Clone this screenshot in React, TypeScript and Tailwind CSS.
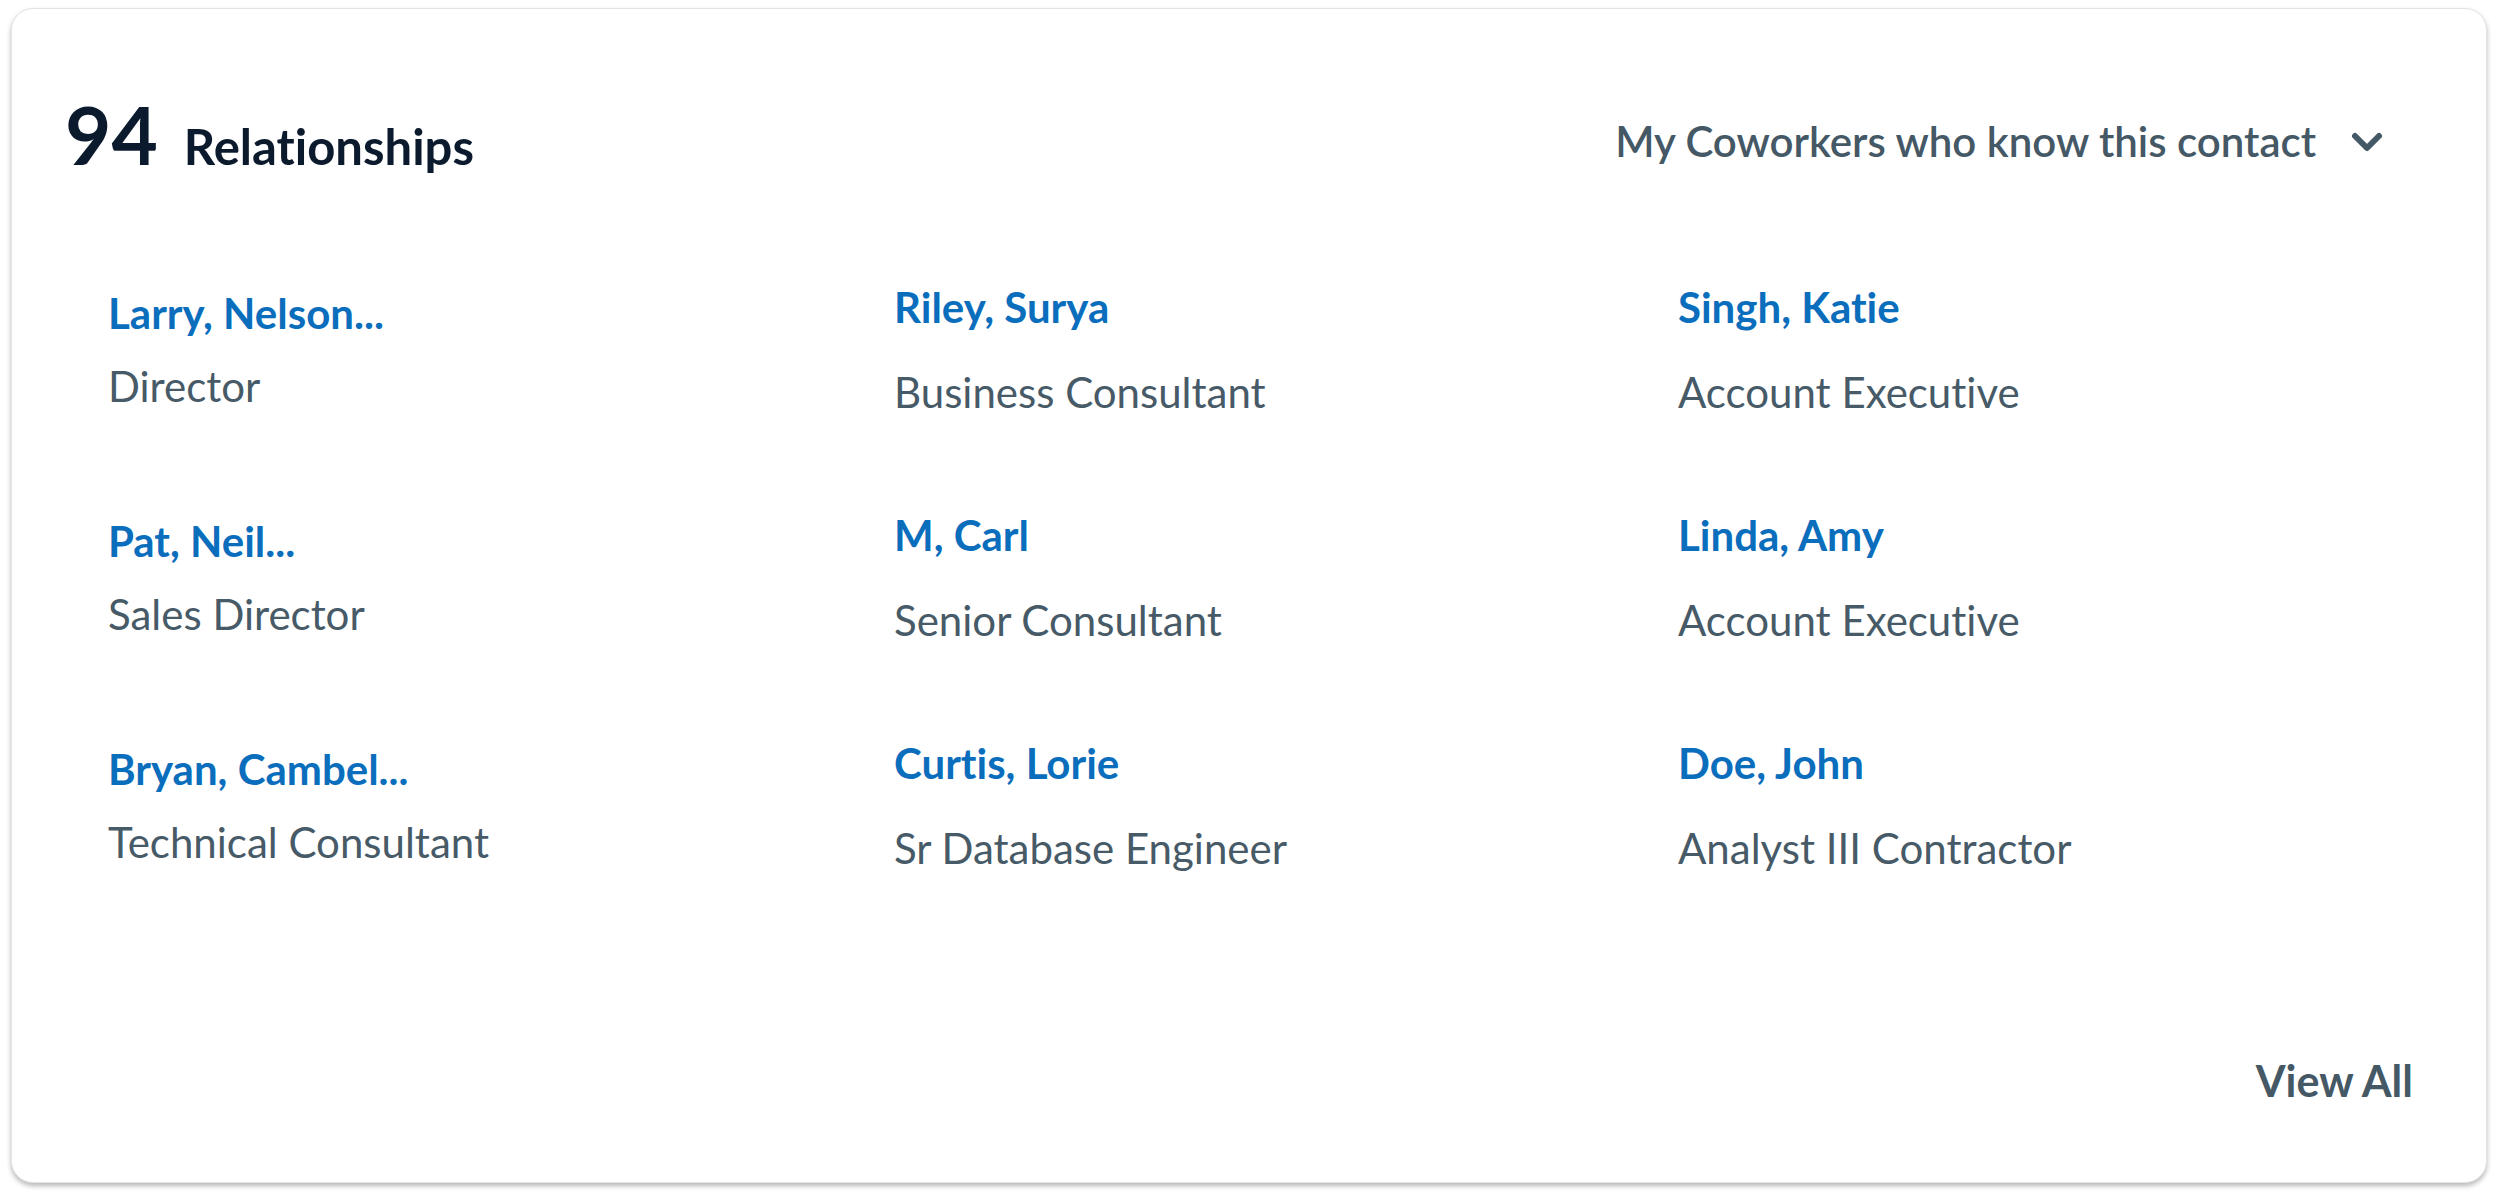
import { ChevronDown } from "lucide-react";

type Contact = { name: string; title: string };

// three columns, read top to bottom
const columns: Contact[][] = [
  [
    { name: "Larry, Nelson...", title: "Director" },
    { name: "Pat, Neil...", title: "Sales Director" },
    { name: "Bryan, Cambel...", title: "Technical Consultant" },
  ],
  [
    { name: "Riley, Surya", title: "Business Consultant" },
    { name: "M, Carl", title: "Senior Consultant" },
    { name: "Curtis, Lorie", title: "Sr Database Engineer" },
  ],
  [
    { name: "Singh, Katie", title: "Account Executive" },
    { name: "Linda, Amy", title: "Account Executive" },
    { name: "Doe, John", title: "Analyst III Contractor" },
  ],
];

function ContactCell({ contact, grouped }: { contact: Contact; grouped: boolean }) {
  return (
    <div className={grouped ? "h-[228px] flex flex-col pt-[6px] gap-[31px]" : "h-[228px] flex flex-col gap-[43px]"}>
      <a href="#" className="text-[42px] leading-none font-bold text-[#0a6ebd] whitespace-nowrap">
        {contact.name}
      </a>
      <span className="text-[42px] leading-none text-[#475a67] whitespace-nowrap">{contact.title}</span>
    </div>
  );
}

export default function App() {
  return (
    <div
      className="min-h-screen bg-white pl-[11px] pt-[8px] [font-variant-ligatures:none]"
      style={{ fontFamily: "Lato, 'Open Sans', sans-serif" }}
    >
      <div className="w-[2476px] h-[1175px] flex flex-col rounded-[22px] bg-white border border-[#e4e4e4] shadow-[0_3px_5px_rgba(0,0,0,0.28)]">
        {/* header */}
        <div className="flex items-start justify-between pt-[85px] pl-[53px] pr-[95px]">
          <div className="flex items-baseline gap-[26px] text-[#0c1a2d]">
            <span className="text-[80px] leading-none font-bold">94</span>
            <span className="text-[49px] leading-none font-bold">Relationships</span>
          </div>
          <button className="mt-[22px] flex items-center gap-[27px] text-[#455866]">
            <span className="text-[42px] leading-none font-semibold">My Coworkers who know this contact</span>
            <ChevronDown size={48} strokeWidth={3} className="mt-[2px]" />
          </button>
        </div>

        {/* contacts */}
        <div className="mt-[112px] pl-[96px] grid grid-cols-[786px_784px_1fr]">
          {columns.map((col, i) => (
            <div key={i} className="flex flex-col">
              {col.map((c) => (
                <ContactCell key={c.name} contact={c} grouped={i === 0} />
              ))}
            </div>
          ))}
        </div>

        <div className="mt-auto flex justify-end pr-[73px] pb-[80px]">
          <a href="#" className="text-[43px] leading-none font-bold text-[#455866]">
            View All
          </a>
        </div>
      </div>
    </div>
  );
}
